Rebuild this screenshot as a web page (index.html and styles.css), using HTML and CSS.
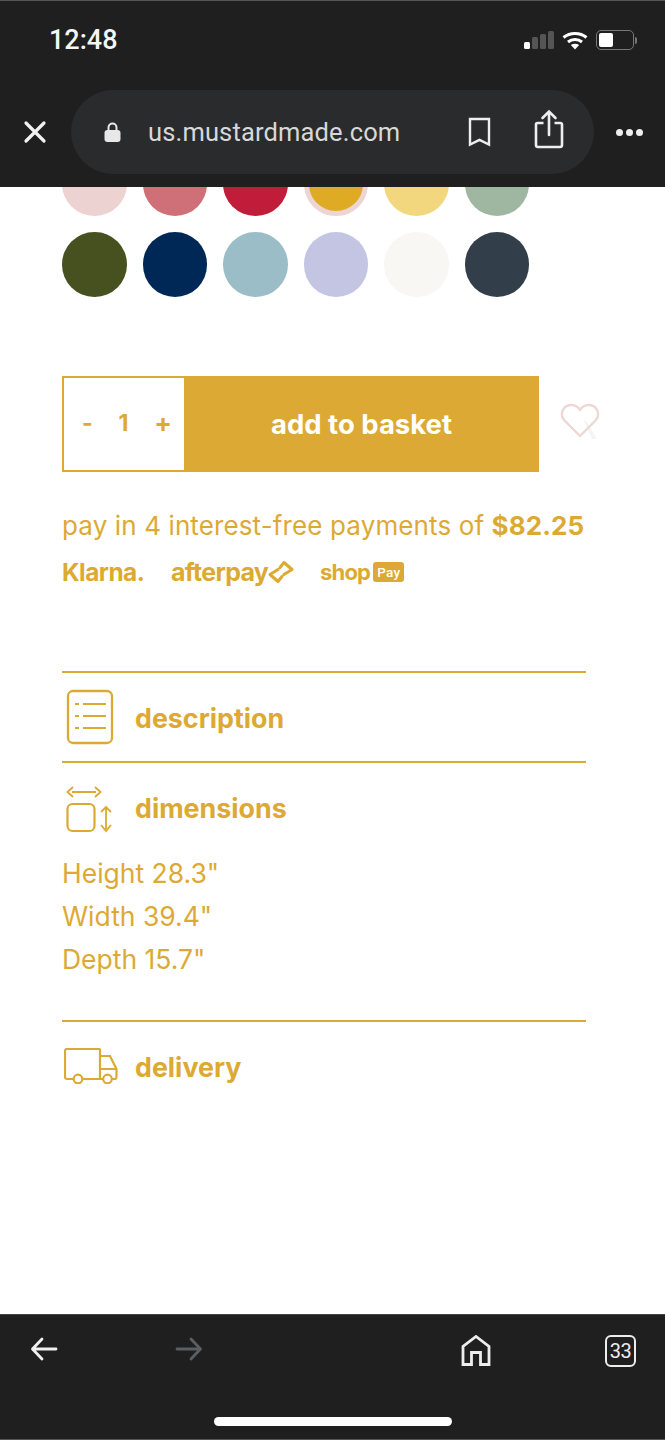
FILE: index.html
```html
<!DOCTYPE html>
<html lang="en">
<head>
<meta charset="utf-8">
<title>us.mustardmade.com</title>
<link rel="stylesheet" href="styles.css">
</head>
<body>
<div class="app">
  <header class="topbar">
    <div class="status">
      <span class="time">12:48</span>
      <div class="status-icons">
        <div class="signal"><i class="on s1"></i><i class="s2"></i><i class="s3"></i><i class="s4"></i></div>
        <svg class="wifi" width="26" height="19" viewBox="0 0 26 19"><path d="M1.500 6.500C8 1 18 1 24.500 6.500M6 11C10 7.700 16 7.700 20 11" fill="none" stroke="#fff" stroke-width="3"/><path d="M13 18.500L8.800 14C11.200 12.300 14.800 12.300 17.200 14Z" fill="#fff"/></svg>
        <div class="battery"><div class="battery-body"><div class="battery-fill"></div></div><div class="battery-cap"></div></div>
      </div>
    </div>
    <div class="urlrow">
      <svg class="close" width="24" height="24" viewBox="0 0 24 24"><path d="M3 3L21 21M21 3L3 21" stroke="#f2f2f2" stroke-width="3.200" stroke-linecap="round"/></svg>
      <div class="urlbar">
        <svg class="lock" width="17" height="20" viewBox="0 0 17 20"><path d="M4.500 9V5.500a4 4 0 0 1 8 0V9" fill="none" stroke="#e8e8e8" stroke-width="2"/><rect x="0.500" y="8" width="16" height="12" rx="3" fill="#e8e8e8"/></svg>
        <span class="url">us.mustardmade.com</span>
        <svg class="bookmark" width="23" height="30" viewBox="0 0 23 30"><path d="M2 2H21V27.500L11.500 22.800L2 27.500Z" fill="none" stroke="#eee" stroke-width="2.400"/></svg>
        <svg class="share" width="30" height="40" viewBox="0 0 30 40"><path d="M15 26V3M8.500 9L15 2.500L21.500 9" fill="none" stroke="#eee" stroke-width="2.600" stroke-linecap="round"/><path d="M9.500 14H3.500a1.500 1.500 0 0 0-1.500 1.500V36a2 2 0 0 0 2 2H26a2 2 0 0 0 2-2V15.500a1.500 1.500 0 0 0-1.500-1.500H20.500" fill="none" stroke="#eee" stroke-width="2.600"/></svg>
      </div>
      <div class="dots"><i></i><i></i><i></i></div>
    </div>
  </header>

  <main class="page">
    <div class="swatches">
      <span class="swatch c1"></span><span class="swatch c2"></span><span class="swatch c3"></span><span class="swatch c4"></span><span class="swatch c5"></span><span class="swatch c6"></span>
      <span class="swatch c7"></span><span class="swatch c8"></span><span class="swatch c9"></span><span class="swatch c10"></span><span class="swatch c11"></span><span class="swatch c12"></span>
    </div>

    <div class="buy">
      <div class="qty"><span>-</span><span>1</span><span class="plus">+</span></div>
      <button class="add">add to basket</button>
      <svg class="heart" width="42" height="38" viewBox="0 0 42 38"><path d="M20 9L29 29L34 29L24 12Z" fill="#f4f4f4" transform="translate(3 7)"/><path d="M20 33L4 17C-1 10 4 2 11 2C15 2 18 4 20 7C22 4 25 2 29 2C36 2 41 10 36 17Z" fill="none" stroke="#eed7d5" stroke-width="2.400" stroke-linejoin="round"/></svg>
    </div>

    <p class="pay">pay in 4 interest-free payments of <strong>$82.25</strong></p>
    <div class="logos">
      <span class="klarna">Klarna.</span>
      <span class="afterpay">afterpay<svg width="26" height="24" viewBox="0 0 26 24"><path d="M12 7.500L16 2.500L24 9.500L16 14.500M14 16.500L10 21.500L2 14.500L10 9.500" fill="none" stroke="#dcaa34" stroke-width="3" stroke-linejoin="round" stroke-linecap="round"/></svg></span>
      <span class="shop">shop<b class="paybadge">Pay</b></span>
    </div>

    <section class="acc first">
      <div class="acc-head">
        <svg class="acc-icon" width="48" height="56" viewBox="0 0 48 56"><rect x="2" y="2" width="44" height="52" rx="5" fill="none" stroke="#dcaa34" stroke-width="2.300"/><path d="M9 15H13M17 15H40M9 27H13M17 27H40M9 39H13M17 39H40" stroke="#dcaa34" stroke-width="2.200"/></svg>
        <h2>description</h2>
      </div>
    </section>

    <section class="acc">
      <div class="acc-head">
        <svg class="acc-icon" width="48" height="50" viewBox="0 0 48 50"><path d="M6 8H30M7 3L1.500 8L7 13M29 3L34.500 8L29 13" fill="none" stroke="#dcaa34" stroke-width="1.800"/><rect x="1.500" y="20" width="27" height="27" rx="5" fill="none" stroke="#dcaa34" stroke-width="2.200"/><path d="M40 23V45M35 28L40 23L45 28M35 41L40 47L45 41" fill="none" stroke="#dcaa34" stroke-width="1.800"/></svg>
        <h2>dimensions</h2>
      </div>
      <div class="dims">
        <p>Height 28.3"</p>
        <p>Width 39.4"</p>
        <p>Depth 15.7"</p>
      </div>
    </section>

    <section class="acc">
      <div class="acc-head">
        <svg class="acc-icon" width="54" height="36" viewBox="0 0 54 36"><path d="M9.500 31H3a2 2 0 0 1-2-2V3a2 2 0 0 1 2-2H35a1 1 0 0 1 1 1V31H18.500M36 8H46L52.500 21V29a2 2 0 0 1-2 2H48M39 31H36M36 21H52.500" fill="none" stroke="#dcaa34" stroke-width="2.200"/><circle cx="14" cy="31" r="4.300" fill="none" stroke="#dcaa34" stroke-width="2.200"/><circle cx="43.500" cy="31" r="4.300" fill="none" stroke="#dcaa34" stroke-width="2.200"/></svg>
        <h2>delivery</h2>
      </div>
    </section>
  </main>

  <footer class="bottombar">
    <div class="nav">
      <svg class="back" width="28" height="28" viewBox="0 0 28 28"><path d="M26 14H3M12 4L2.500 14L12 24" fill="none" stroke="#f0f0f0" stroke-width="2.800" stroke-linecap="round" stroke-linejoin="round"/></svg>
      <svg class="forward" width="28" height="28" viewBox="0 0 28 28"><path d="M2 14H25M16 4L25.500 14L16 24" fill="none" stroke="#5d5e60" stroke-width="2.800" stroke-linecap="round" stroke-linejoin="round"/></svg>
      <svg class="home" width="30" height="31" viewBox="0 0 30 31"><path d="M2 29.500V11.500L15 1.500L28 11.500V29.500H19.500V17.500H10.500V29.500Z" fill="none" stroke="#ededed" stroke-width="2.800"/></svg>
      <div class="tabs">33</div>
    </div>
    <div class="home-indicator"></div>
  </footer>
</div>
</body>
</html>
```
FILE: styles.css
```css
* { box-sizing: border-box; }
html, body { margin: 0; padding: 0; background: #fff; }
body { font-family: "Inter", "Liberation Sans", sans-serif; color: #dcaa34; }
svg { display: block; flex: none; }
p, h2 { margin: 0; }

.app { width: 665px; height: 1440px; display: flex; flex-direction: column; overflow: hidden; }

.topbar { height: 187px; flex: none; background: #1f1f1f; border-top: 1px solid #555; }
.status { height: 89px; display: flex; justify-content: space-between; align-items: flex-start; padding: 23px 28px 0 49px; }
.time { font: 500 27px/32px "Roboto", sans-serif; color: #f5f5f5; }
.status-icons { display: flex; align-items: center; gap: 8px; padding-top: 6px; }
.signal { display: flex; align-items: flex-end; gap: 2px; height: 18px; }
.signal i { width: 6px; background: #555; border-radius: 1.500px; }
.signal .on { background: #fff; }
.s1 { height: 7px; } .s2 { height: 12px; } .s3 { height: 15px; } .s4 { height: 18px; }
.battery { display: flex; align-items: center; gap: 1px; }
.battery-body { width: 38px; height: 20px; border: 1.500px solid #777; border-radius: 5px; padding: 2px; }
.battery-fill { width: 14px; height: 100%; background: #fff; border-radius: 2px; }
.battery-cap { width: 2px; height: 7px; background: #777; border-radius: 0 2px 2px 0; }

.urlrow { display: flex; align-items: center; height: 84px; padding-left: 23px; }
.close { margin-right: 24px; }
.urlbar { width: 523px; height: 84px; border-radius: 42px; background: #2a2b2d; display: flex; align-items: center; padding-left: 33px; }
.lock { margin-right: 27px; }
.url { font: 400 25.500px/30px "Roboto", sans-serif; color: #d8d8d8; width: 320px; letter-spacing: 0.15px; }
.bookmark { margin-right: 43px; }
.share { margin-bottom: 6px; }
.dots { display: flex; gap: 3px; margin-left: 22px; }
.dots i { width: 7px; height: 7px; border-radius: 50%; background: #eee; }

.page { flex: 1; min-height: 0; overflow: hidden; padding: 0 79px 0 62px; }
.swatches { display: grid; grid-template-columns: repeat(6, 64.500px); column-gap: 16px; row-gap: 16.500px; margin-top: -36px; }
.swatch { width: 64.500px; height: 64.500px; border-radius: 50%; }
.c1 { background: #ecd3d1; } .c2 { background: #cf6f77; } .c3 { background: #c11c3a; }
.c4 { background: #dfab25; border: 5px solid #ecd5d2; }
.c5 { background: #f3d77f; } .c6 { background: #9fb7a0; }
.c7 { background: #475120; } .c8 { background: #002856; } .c9 { background: #9bbdc8; }
.c10 { background: #c3c5e3; } .c11 { background: #f8f7f4; } .c12 { background: #323f4b; }

.buy { display: flex; align-items: center; margin-top: 79px; height: 96px; width: 540px; }
.qty { width: 122px; height: 96px; border: 2px solid #dcaa34; border-right: 0; display: flex; justify-content: space-between; align-items: center; padding: 0 12px 2px 18px; font-weight: 700; font-size: 23px; background: #fff; }
.plus { font-size: 26px; }
.add { width: 355px; height: 96px; border: 0; background: #dcaa34; color: #fff; font: 700 27.500px/34px "Inter", sans-serif; padding: 0; }
.heart { margin-left: 21px; margin-top: -4px; }

.pay { font-size: 26px; line-height: 34px; margin-top: 37px; white-space: nowrap; font-weight: 400; letter-spacing: 0.12px; }
.pay strong { font-weight: 700; }
.logos { display: flex; align-items: center; height: 30px; margin-top: 14px; font-weight: 700; white-space: nowrap; }
.klarna { font-size: 24.400px; width: 109px; letter-spacing: -0.5px; }
.afterpay { font-size: 25px; width: 149px; display: flex; align-items: center; letter-spacing: -0.7px; }
.shop { font-size: 22px; display: flex; align-items: center; gap: 3px; letter-spacing: -0.8px; }
.paybadge { font: 500 13.500px/20px "Roboto", sans-serif; background: #dcaa34; color: #fff; border-radius: 3px; padding: 0 4px; height: 20px; letter-spacing: 0.3px; }

.acc { width: 524px; border-top: 2px solid #dcaa34; }
.acc.first { margin-top: 84px; }
.acc-head { display: flex; align-items: center; }
.acc-icon { margin-left: 4px; }
.first .acc-head { height: 88px; }
.first .acc-icon { margin-right: 21px; }
.acc h2 { font-size: 26.800px; font-weight: 700; line-height: 34px; white-space: nowrap; margin-top: 2px; }
.acc:nth-of-type(2) .acc-head { height: 88px; }
.acc:nth-of-type(2) .acc-icon { margin-right: 21px; margin-top: 4px; }
.acc:nth-of-type(2) { padding-bottom: 39px; }
.dims { font-size: 26.500px; font-weight: 400; line-height: 43px; margin-top: 1px; }
.acc:nth-of-type(3) .acc-head { height: 88px; }
.acc:nth-of-type(3) .acc-icon { margin-left: 2px; margin-right: 17px; }

.bottombar { height: 126px; flex: none; background: #1f1f1f; border-top: 1px solid #444; border-bottom: 1px solid #555; display: flex; flex-direction: column; }
.nav { height: 102px; display: flex; align-items: flex-start; padding: 20px 29px 0 30px; }
.back { margin-right: 117px; }
.forward { margin-right: 258px; }
.home { margin-right: 114px; }
.tabs { width: 31px; height: 32px; border: 2.200px solid #ededed; border-radius: 6px; color: #ededed; font: 400 20px/28px "Roboto", sans-serif; text-align: center; letter-spacing: -0.5px; }
.home-indicator { width: 238px; height: 9px; background: #fff; border-radius: 5px; margin: 0 auto; }
```
